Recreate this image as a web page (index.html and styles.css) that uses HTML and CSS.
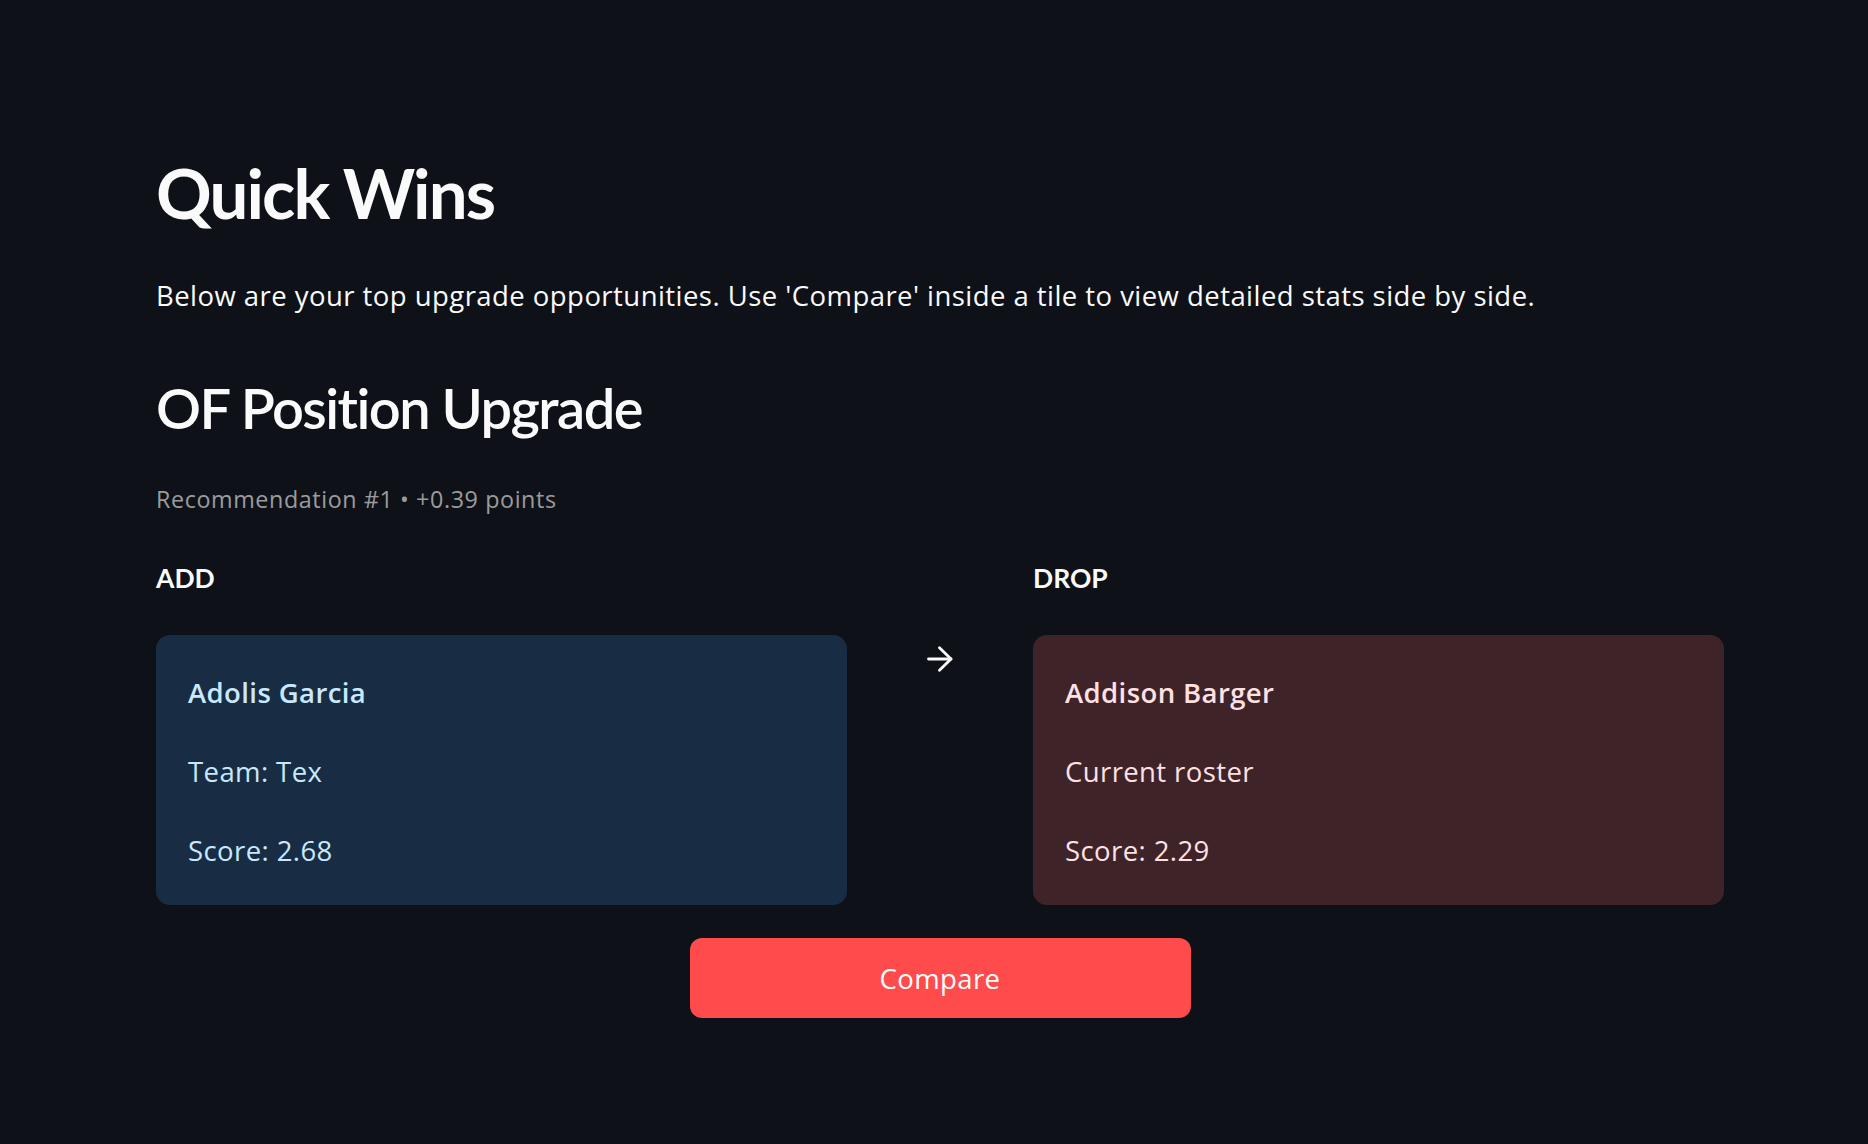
FILE: index.html
```html
<!DOCTYPE html>
<html lang="en">
<head>
<meta charset="utf-8">
<title>Quick Wins</title>
<link rel="stylesheet" href="styles.css">
</head>
<body>
<main class="page">
  <h1 class="title">Quick Wins</h1>
  <p class="intro">Below are your top upgrade opportunities. Use 'Compare' inside a tile to view detailed stats side by side.</p>
  <h2 class="section">OF Position Upgrade</h2>
  <p class="caption">Recommendation #1 • +0.39 points</p>
  <div class="swap">
    <div class="label">ADD</div>
    <div class="label-spacer"></div>
    <div class="label">DROP</div>
    <div class="card card-add">
      <div class="card-name">Adolis Garcia</div>
      <div class="card-line">Team: Tex</div>
      <div class="card-line">Score: 2.68</div>
    </div>
    <div class="arrow-col">
      <svg class="arrow" width="26" height="26" viewBox="0 0 26 26" aria-hidden="true">
        <line x1="1.5" y1="13" x2="24" y2="13"/>
        <polyline points="12.5,1.8 24,13 12.5,24.2"/>
      </svg>
    </div>
    <div class="card card-drop">
      <div class="card-name">Addison Barger</div>
      <div class="card-line">Current roster</div>
      <div class="card-line">Score: 2.29</div>
    </div>
  </div>
  <div class="actions">
    <button class="btn-compare" type="button">Compare</button>
  </div>
</main>
</body>
</html>
```

FILE: styles.css
```css
html, body {
  margin: 0;
  padding: 0;
  background: #0e1117;
}

body {
  color: #fafafa;
  font-family: "Open Sans", Lato, "Noto Sans", sans-serif;
  height: 1144px;
  overflow: hidden;
}

.page {
  width: 1568px;
  padding: 149px 0 0 156px;
}

.title {
  margin: 0;
  font-family: Lato, "Open Sans", sans-serif;
  font-size: 69px;
  line-height: 88px;
  font-weight: 700;
  letter-spacing: -1.9px;
}

.intro {
  margin: 39px 0 0;
  font-size: 27.5px;
  line-height: 40px;
  font-weight: 400;
  letter-spacing: 0.45px;
}

.section {
  margin: 56px 0 0;
  font-family: Lato, "Open Sans", sans-serif;
  font-size: 56px;
  line-height: 72px;
  font-weight: 600;
  letter-spacing: -1.55px;
}

.caption {
  margin: 37px 0 0;
  font-size: 23.3px;
  line-height: 36px;
  letter-spacing: 0.6px;
  color: rgba(250, 250, 250, 0.6);
}

.swap {
  margin-top: 41px;
  display: grid;
  grid-template-columns: 691px 186px 691px;
  grid-template-rows: 40px auto;
  row-gap: 37px;
}

.label {
  font-family: Lato, "Open Sans", sans-serif;
  font-size: 26.5px;
  line-height: 40px;
  font-weight: 700;
}

.card {
  border-radius: 14px;
  padding: 38px 32px 34px;
  font-size: 27.5px;
  line-height: 40px;
  letter-spacing: 0.4px;
}

.card-add {
  background: #182d44;
  color: #c9e8fd;
}

.card-drop {
  background: #3e2329;
  color: #ffe0e3;
}

.card-name {
  font-weight: 600;
}

.card-line {
  margin-top: 39px;
}

.arrow-col {
  display: flex;
  justify-content: center;
  padding-top: 11px;
}

.arrow {
  fill: none;
  stroke: #fafafa;
  stroke-width: 2.8;
  stroke-linecap: round;
  stroke-linejoin: round;
}

.actions {
  margin-top: 33px;
  display: flex;
  justify-content: center;
}

.btn-compare {
  width: 501px;
  height: 80px;
  border: none;
  border-radius: 12px;
  background: #ff4b4b;
  color: #ffffff;
  font-family: "Open Sans", Lato, "Noto Sans", sans-serif;
  font-size: 27.5px;
  font-weight: 400;
  letter-spacing: 0.4px;
  cursor: pointer;
}
```
